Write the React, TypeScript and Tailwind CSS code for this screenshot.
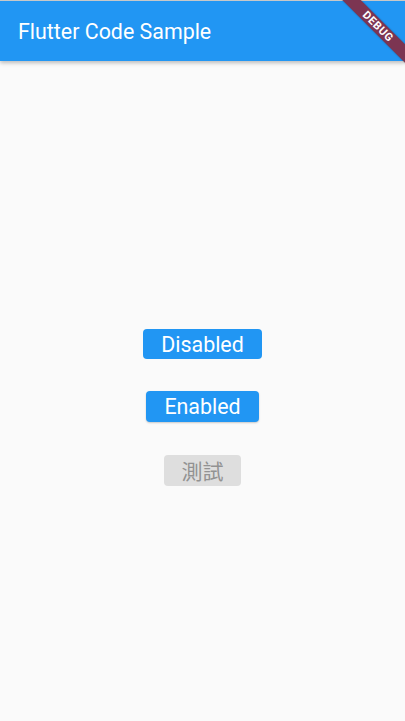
export default function App() {
  return (
    <div className="relative h-[721px] w-[405px] overflow-hidden bg-[#fafafa] font-['Roboto',sans-serif]">
      <header className="h-[61px] border-t border-[#c8c8c8] bg-[#2196f3] shadow-[0_2px_4px_rgba(0,0,0,0.25)]">
        <h1 className="flex h-full items-center pl-[18px] pt-[2px] text-[21.4px] leading-none text-white">
          Flutter Code Sample
        </h1>
      </header>

      <main className="flex flex-col items-center pt-[268px]">
        <button className="flex h-[30px] w-[119px] items-center justify-center rounded-[4px] bg-[#2196f3] pt-[2px] text-[21.4px] text-white">
          Disabled
        </button>
        <button className="mt-[32px] flex h-[31px] w-[113px] items-center justify-center rounded-[4px] bg-[#2196f3] pt-[2px] text-[21.4px] text-white shadow-[0_1px_2px_rgba(0,0,0,0.2)]">
          Enabled
        </button>
        <button className="mt-[33px] flex h-[31px] w-[77px] items-center justify-center rounded-[4px] bg-[#dedede] font-['Noto_Sans_CJK_TC',sans-serif] text-[21px] text-[#929292]">
          測試
        </button>
      </main>

      <div className="absolute left-[328px] top-[19.5px] flex h-[13px] w-[100px] rotate-45 items-center justify-center bg-[#7c3552] shadow-[0_0_2px_rgba(0,0,0,0.3)]">
        <span className="text-[11px] font-bold leading-none tracking-[0.6px] text-white">DEBUG</span>
      </div>
    </div>
  );
}
